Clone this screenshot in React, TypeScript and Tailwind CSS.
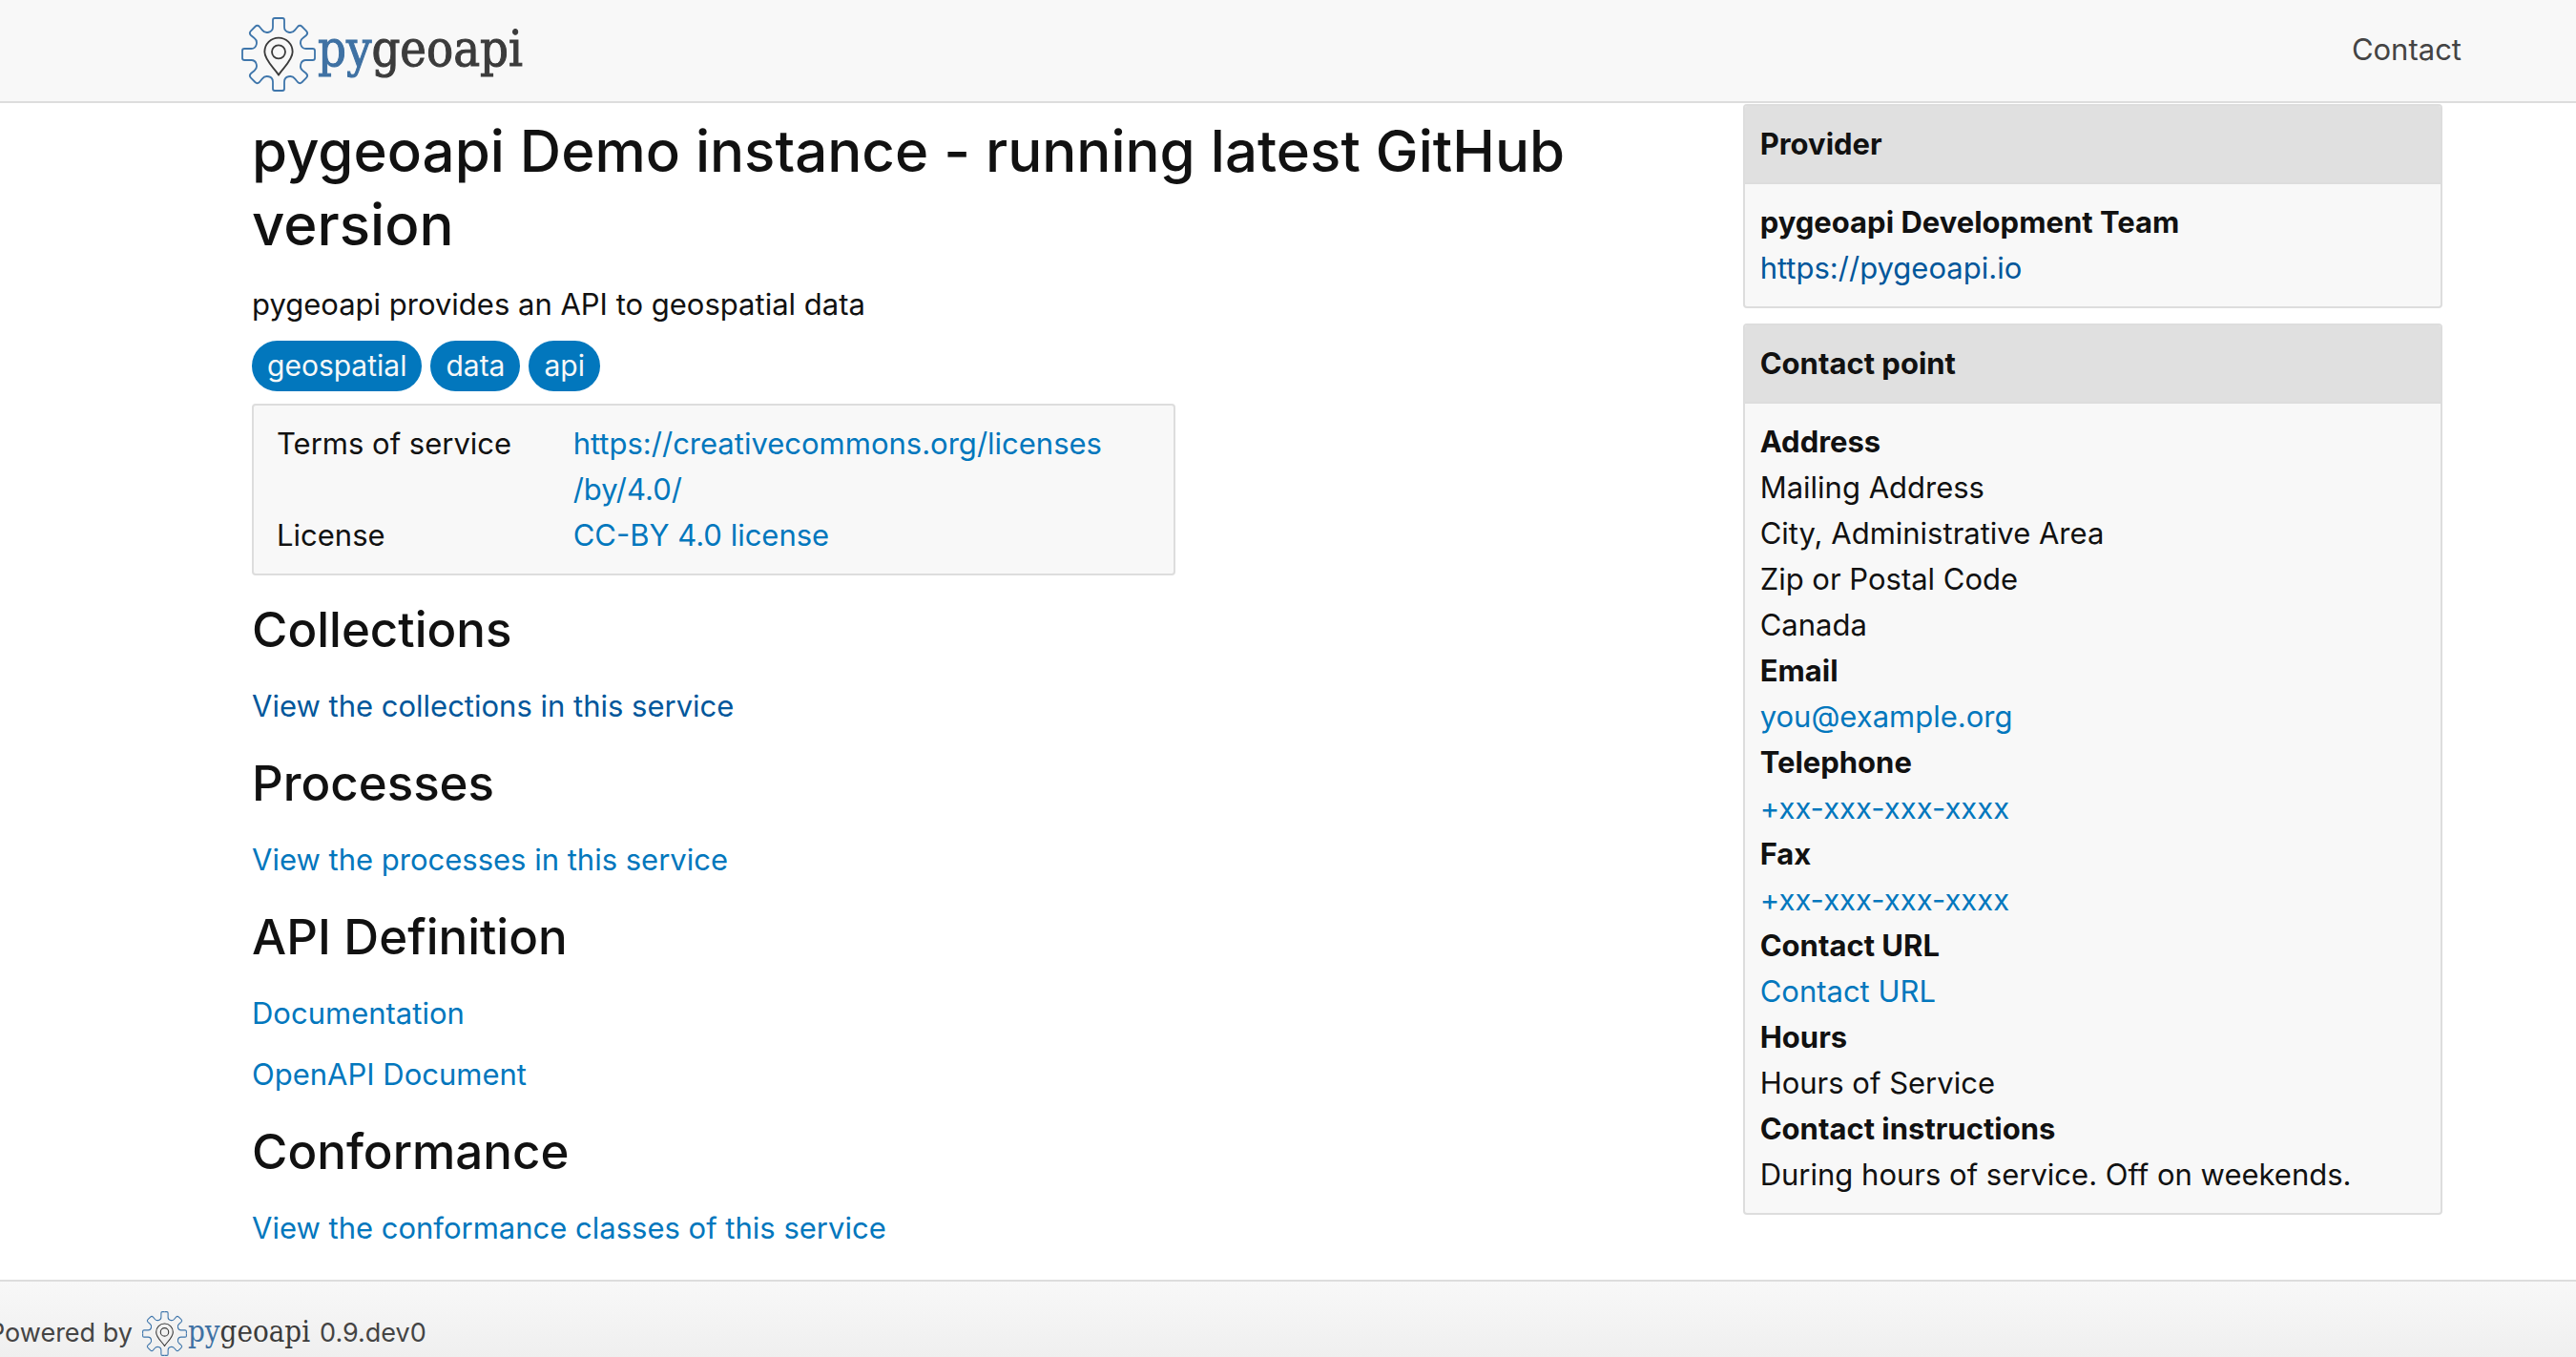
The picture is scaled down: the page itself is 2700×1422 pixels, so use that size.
import type { ReactNode } from "react";

const quarter =
  "M0-114H-12Q-18-114-18-107V-86C-18-68-42-64-51-76L-60-87Q-67-94-74-87L-87-74Q-94-67-87-60L-76-51C-64-42-68-18-86-18H-107Q-114-18-114-12V0";

function Gear({ className }: { className: string }) {
  return (
    <svg viewBox="-117 -117 234 234" className={className} fill="none" strokeWidth="5.5" aria-hidden="true">
      <g stroke="#3f76ab">
        <path d={quarter} />
        <path d={quarter} transform="rotate(90)" />
        <path d={quarter} transform="rotate(180)" />
        <path d={quarter} transform="rotate(270)" />
      </g>
      <g stroke="#3b3b3b" strokeLinejoin="round">
        <path d="M0 65C-10 46-44 20-44-8A44 44 0 0 1 44-8C44 20 10 46 0 65Z" />
        <circle cx="0" cy="-8" r="21" />
      </g>
    </svg>
  );
}

function Wordmark({ className }: { className: string }) {
  return (
    <span className={`font-["DejaVu_Serif_Condensed","DejaVu_Serif",serif] text-[#3b3b3b] ${className}`}>
      <span className="text-[#3f71a3]">py</span>geoapi
    </span>
  );
}

function Link({ children, visited = false }: { children: ReactNode; visited?: boolean }) {
  return (
    <a href="#" className={visited ? "text-[#01579b]" : "text-[#0277bd]"}>
      {children}
    </a>
  );
}

function Card({ title, children }: { title: string; children: ReactNode }) {
  return (
    <section className="overflow-hidden rounded-[4px] border-2 border-[#ddd] bg-[#f8f8f8]">
      <h2 className="border-b-2 border-[#ddd] bg-[#e0e0e0] p-4 font-bold">{title}</h2>
      <div className="p-4">{children}</div>
    </section>
  );
}

function Topic({ title, children }: { title: string; children: ReactNode }) {
  return (
    <section>
      <h2 className="mt-[25px] mb-6 text-[51px] leading-[64px] font-medium">{title}</h2>
      <div className="flex flex-col items-start gap-4">{children}</div>
    </section>
  );
}

const tags = ["geospatial", "data", "api"];

export default function App() {
  return (
    <div className='flex min-h-screen flex-col overflow-x-hidden bg-white font-["Inter",sans-serif] text-[31px] leading-[48px] text-[#111]'>
      <header className="flex h-[108px] items-center justify-between border-b-2 border-[#ddd] bg-[#f8f8f8] pr-[120px] pb-0.5 pl-[253px] text-[#444]">
        <a href="#" className="flex items-center pt-2.5" aria-label="pygeoapi">
          <Gear className="size-[78px]" />
          <Wordmark className="pb-3 pl-[2px] text-[52px] leading-[64px] [-webkit-text-stroke:1px]" />
        </a>
        <a href="#">Contact</a>
      </header>

      <main className="grid grid-cols-[minmax(0,2fr)_minmax(0,1fr)] gap-24 pr-[140px] pl-[264px]">
        <div className="pt-3">
          <h1 className="text-[60px] leading-[77px] font-medium">
            pygeoapi Demo instance - running latest GitHub version
          </h1>
          <p className="mt-[21px]">pygeoapi provides an API to geospatial data</p>
          <ul className="mt-3.5 flex gap-[9px]">
            {tags.map((tag) => (
              <li key={tag} className="rounded-full bg-[#0277bd] px-4 py-[3px] text-[30px] leading-[47px] text-[#f8f8f8]">
                {tag}
              </li>
            ))}
          </ul>
          <dl className="mt-[13px] grid w-[66%] grid-cols-[1fr_2fr] gap-x-2 rounded-[4px] border-2 border-[#ddd] bg-[#f8f8f8] px-6 py-4">
            <dt>Terms of service</dt>
            <dd>
              <Link>
                https://creativecommons.org/licenses
                <wbr />
                /by/4.0/
              </Link>
            </dd>
            <dt>License</dt>
            <dd>
              <Link>CC-BY 4.0 license</Link>
            </dd>
          </dl>
          <Topic title="Collections">
            <Link visited>View the collections in this service</Link>
          </Topic>
          <Topic title="Processes">
            <Link>View the processes in this service</Link>
          </Topic>
          <Topic title="API Definition">
            <Link>Documentation</Link>
            <Link>OpenAPI Document</Link>
          </Topic>
          <Topic title="Conformance">
            <Link>View the conformance classes of this service</Link>
          </Topic>
        </div>

        <aside className="flex flex-col gap-4 pt-px">
          <Card title="Provider">
            <p className="font-bold">pygeoapi Development Team</p>
            <p>
              <Link visited>https://pygeoapi.io</Link>
            </p>
          </Card>
          <Card title="Contact point">
            <dl>
              <dt className="font-bold">Address</dt>
              <dd>Mailing Address</dd>
              <dd>City, Administrative Area</dd>
              <dd>Zip or Postal Code</dd>
              <dd>Canada</dd>
              <dt className="font-bold">Email</dt>
              <dd>
                <Link>you@example.org</Link>
              </dd>
              <dt className="font-bold">Telephone</dt>
              <dd>
                <Link>+xx-xxx-xxx-xxxx</Link>
              </dd>
              <dt className="font-bold">Fax</dt>
              <dd>
                <Link>+xx-xxx-xxx-xxxx</Link>
              </dd>
              <dt className="font-bold">Contact URL</dt>
              <dd>
                <Link>Contact URL</Link>
              </dd>
              <dt className="font-bold">Hours</dt>
              <dd>Hours of Service</dd>
              <dt className="font-bold">Contact instructions</dt>
              <dd>During hours of service. Off on weekends.</dd>
            </dl>
          </Card>
        </aside>
      </main>

      <footer className="mt-[30px] flex h-[79px] grow flex-col overflow-hidden border-t-2 border-[#ddd] bg-linear-to-b from-[#f8f8f8] to-[#efefef] pt-[30px] text-[27px] text-[#444]">
        <div className="-ml-3 flex items-center gap-[10px]">
          <span>Powered by</span>
          <a href="#" className="flex items-center" aria-label="pygeoapi">
            <Gear className="size-[47px]" />
            <Wordmark className="pb-1 pl-px text-[31px] leading-[40px]" />
          </a>
          <span>0.9.dev0</span>
        </div>
      </footer>
    </div>
  );
}
